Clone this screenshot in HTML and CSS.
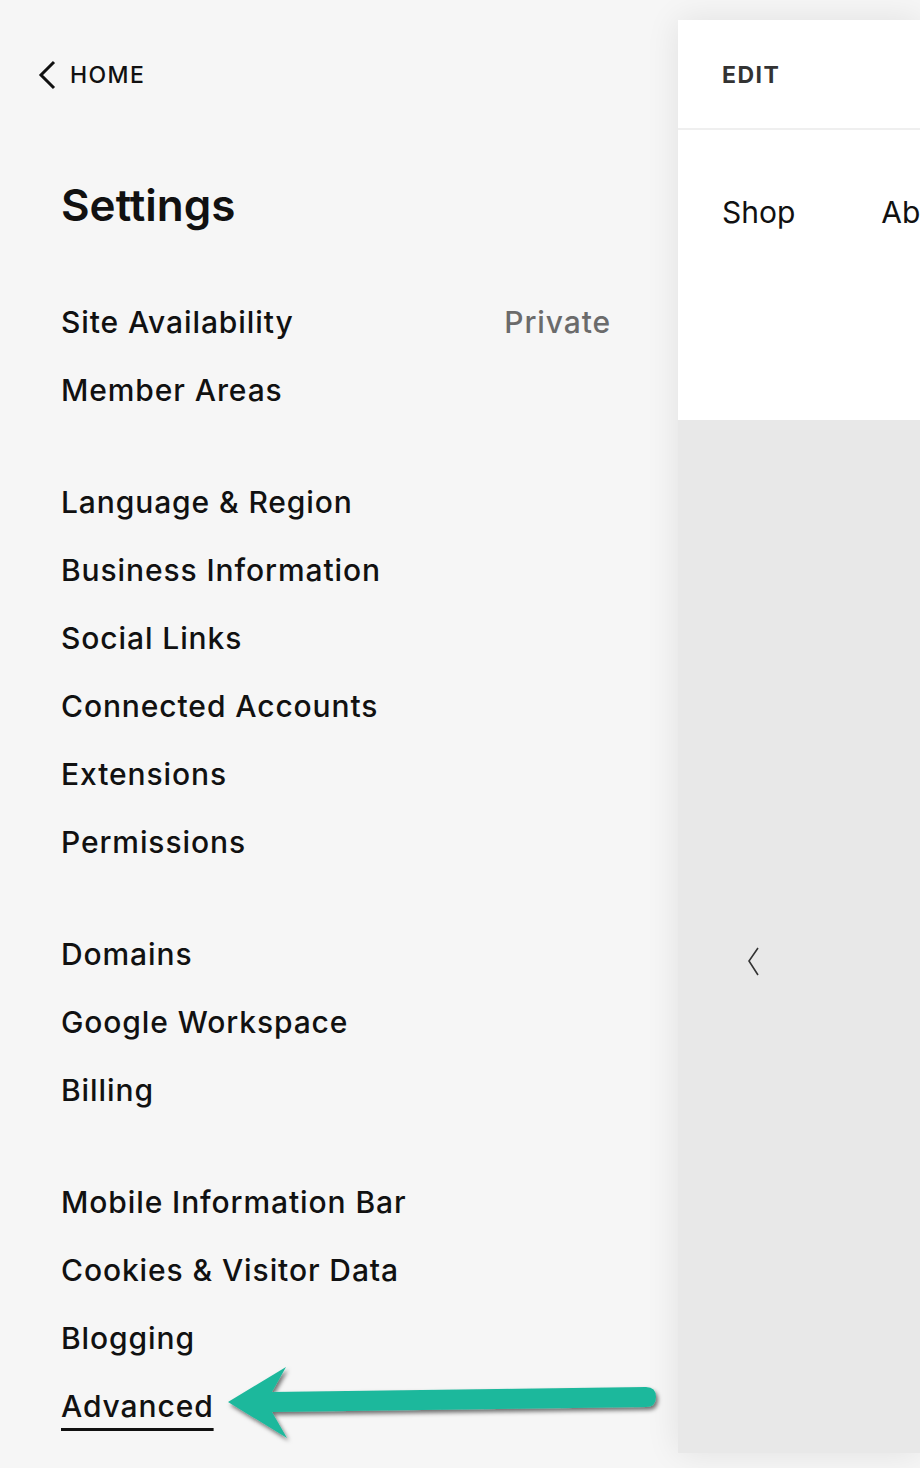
FILE: index.html
```html
<!DOCTYPE html>
<html lang="en">
<head>
    <meta charset="UTF-8">
    <meta name="viewport" content="width=device-width, initial-scale=1.0">
    <title>Settings</title>
    <link rel="stylesheet" href="styles.css">
</head>
<body>
    <div class="sidebar">
        <a class="back" href="#">
            <svg class="back-icon" width="20" height="30" viewBox="0 0 20 30"><path d="M17 2 L4 15 L17 28" fill="none" stroke="#111" stroke-width="3"/></svg>
            <span>HOME</span>
        </a>

        <h1 class="title">Settings</h1>

        <div class="group">
            <div class="row"><span>Site Availability</span><span class="value">Private</span></div>
            <div class="row"><span>Member Areas</span></div>
        </div>

        <div class="group">
            <div class="row"><span>Language &amp; Region</span></div>
            <div class="row"><span>Business Information</span></div>
            <div class="row"><span>Social Links</span></div>
            <div class="row"><span>Connected Accounts</span></div>
            <div class="row"><span>Extensions</span></div>
            <div class="row"><span>Permissions</span></div>
        </div>

        <div class="group">
            <div class="row"><span>Domains</span></div>
            <div class="row"><span>Google Workspace</span></div>
            <div class="row"><span>Billing</span></div>
        </div>

        <div class="group">
            <div class="row"><span>Mobile Information Bar</span></div>
            <div class="row"><span>Cookies &amp; Visitor Data</span></div>
            <div class="row"><span>Blogging</span></div>
            <div class="row"><span class="active">Advanced</span></div>
        </div>
    </div>

    <div class="preview">
        <div class="card">
            <div class="card-head">EDIT</div>
            <div class="nav">
                <span>Shop</span>
                <span>Ab</span>
            </div>
        </div>
        <div class="canvas">
            <svg width="12" height="30" viewBox="0 0 12 30"><path d="M11 1 L2 14 L11 28" fill="none" stroke="#333" stroke-width="1.6"/></svg>
        </div>
    </div>

    <!-- callout arrow pointing at "Advanced" -->
    <svg class="arrow" width="460" height="100" viewBox="0 0 460 100">
        <defs>
            <filter id="shade" x="-10%" y="-30%" width="120%" height="160%">
                <feDropShadow dx="2" dy="3" stdDeviation="2" flood-color="#000" flood-opacity="0.55"/>
            </filter>
        </defs>
        <path filter="url(#shade)" fill="#1fb89c"
              d="M8 42 L66 7 L52 32 L426 27 Q436 27 436 37 Q436 47 426 47 L52 52 L67 78 Z"/>
    </svg>
</body>
</html>
```

FILE: styles.css
```css
body {
    margin: 0;
    background: #f6f6f6;
    font-family: Inter, 'Liberation Sans', sans-serif;
    color: #111;
    display: flex;
    align-items: flex-start;
    height: 1468px;
    overflow: hidden;
    position: relative;
}

.sidebar {
    width: 678px;
    flex-shrink: 0;
    box-sizing: border-box;
    padding: 60px 67px 0 61px;
}

.back {
    display: flex;
    align-items: center;
    gap: 13px;
    height: 30px;
    margin-left: -24px;
    color: #111;
    text-decoration: none;
    font-size: 23px;
    font-weight: 500;
    letter-spacing: 1.4px;
}

.title {
    margin: 90px 0 0;
    font-size: 44px;
    line-height: 50px;
    font-weight: 600;
}

.group {
    margin-top: 44px;
}

.group:first-of-type {
    margin-top: 58px;
}

.row {
    display: flex;
    justify-content: space-between;
    height: 68px;
    line-height: 68px;
    font-size: 30px;
    font-weight: 500;
    letter-spacing: 0.9px;
}

.value {
    color: #6b6b6b;
}

.active {
    text-decoration: underline;
    text-decoration-thickness: 3px;
    text-underline-offset: 11px;
}

.preview {
    flex: 1;
    margin-top: 20px;
    height: 1433px;
    display: flex;
    flex-direction: column;
    box-shadow: 0 0 32px rgba(0,0,0,0.09);
    overflow: hidden;
}

.card {
    background: #fff;
    height: 400px;
}

.card-head {
    height: 110px;
    box-sizing: border-box;
    border-bottom: 2px solid #efefef;
    padding-left: 44px;
    line-height: 110px;
    font-size: 23px;
    font-weight: 700;
    letter-spacing: 1.5px;
    color: #333;
}

.nav {
    display: flex;
    gap: 86px;
    padding: 64px 0 0 44px;
    font-size: 30px;
    font-weight: 400;
    white-space: nowrap;
}

.canvas {
    flex: 1;
    background: #e8e8e8;
    padding: 527px 0 0 69px;
}

.arrow {
    position: absolute;
    left: 220px;
    top: 1360px;
}
```
